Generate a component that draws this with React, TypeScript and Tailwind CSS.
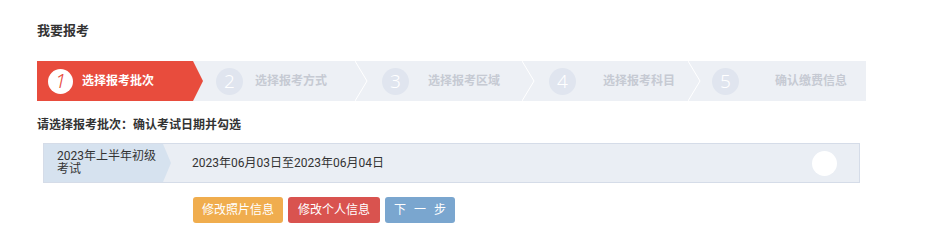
import React from "react";

const steps = [
  { n: "2", label: "选择报考方式", w: "w-[162px]", pl: "pl-[23px]", gap: "ml-[12px]" },
  { n: "3", label: "选择报考区域", w: "w-[167px]", pl: "pl-[27px]", gap: "ml-[19px]" },
  { n: "4", label: "选择报考科目", w: "w-[166px]", pl: "pl-[27px]", gap: "ml-[27px]" },
  { n: "5", label: "确认缴费信息", w: "flex-1", pl: "pl-[24px]", gap: "ml-[36px]" },
];

function Chevron() {
  return (
    <svg
      className="absolute left-0 top-0"
      width="14"
      height="40"
      viewBox="0 0 14 40"
    >
      <polyline points="0,0 12,20 0,40" fill="none" stroke="#ffffff" strokeWidth="1" />
    </svg>
  );
}

function StepBar() {
  return (
    <div className="flex h-[40px] w-[829px] bg-[#edf0f5]">
      <div className="relative flex w-[156px] items-center bg-[#e84c3d] pl-[11px]">
        <div className="flex h-[25px] w-[25px] items-center justify-center rounded-full bg-white">
          <span className="text-[20px] font-light italic leading-none text-[#e84c3d] [font-family:'Noto_Sans',sans-serif]">
            1
          </span>
        </div>
        <span className="ml-[9px] text-[12px] font-bold text-white">选择报考批次</span>
        <svg
          className="absolute right-[-10px] top-0"
          width="10"
          height="40"
          viewBox="0 0 10 40"
        >
          <polygon points="0,0 10,20 0,40" fill="#e84c3d" />
        </svg>
      </div>
      {steps.map((s, i) => (
        <div key={s.n} className={`relative flex items-center ${s.w} ${s.pl}`}>
          {i > 0 && <Chevron />}
          <div className="flex h-[27px] w-[27px] items-center justify-center rounded-full bg-[#e0e5ef]">
            <span className="text-[19px] font-light leading-none text-white [font-family:'Noto_Sans',sans-serif]">
              {s.n}
            </span>
          </div>
          <span className={`${s.gap} text-[12px] font-bold text-[#c6cad3]`}>{s.label}</span>
        </div>
      ))}
    </div>
  );
}

function BatchRow() {
  return (
    <div className="ml-[6px] flex h-[40px] w-[817px] items-center border border-[#d5dce8] bg-[#eaeef4]">
      <div className="relative flex h-full w-[119px] items-center bg-[#d6e2ef] pl-[13px]">
        <span className="whitespace-nowrap text-[12px] leading-[13px] text-[#333]">
          2023年上半年初级
          <br />
          考试
        </span>
        <svg
          className="absolute right-[-8px] top-0"
          width="8"
          height="38"
          viewBox="0 0 8 38"
        >
          <polygon points="0,0 8,19 0,38" fill="#d6e2ef" />
        </svg>
      </div>
      <span className="ml-[29px] text-[12px] text-[#333]">2023年06月03日至2023年06月04日</span>
      <div className="ml-auto mr-[22px] h-[25px] w-[25px] rounded-full bg-white" />
    </div>
  );
}

export default function App() {
  return (
    <div className="min-h-[252px] w-[929px] bg-white px-[37px] pt-[23px] [font-family:Roboto,'Noto_Sans_CJK_SC',sans-serif]">
      <h1 className="text-[13px] font-bold leading-[16px] text-[#333]">我要报考</h1>
      <div className="mt-[22px]">
        <StepBar />
      </div>
      <p className="mt-[16px] text-[12px] font-bold leading-[16px] text-[#333]">
        请选择报考批次：确认考试日期并勾选
      </p>
      <div className="mt-[10px]">
        <BatchRow />
      </div>
      <div className="mt-[14px] flex gap-[5px] pl-[156px]">
        <button className="h-[26px] w-[90px] rounded-[3px] bg-[#f0ad4e] text-[12px] text-white">
          修改照片信息
        </button>
        <button className="h-[26px] w-[92px] rounded-[3px] bg-[#d9534f] text-[12px] text-white">
          修改个人信息
        </button>
        <button className="h-[26px] w-[70px] rounded-[3px] bg-[#7aa6cf] text-[12px] text-white [word-spacing:5px]">
          下 一 步
        </button>
      </div>
    </div>
  );
}
